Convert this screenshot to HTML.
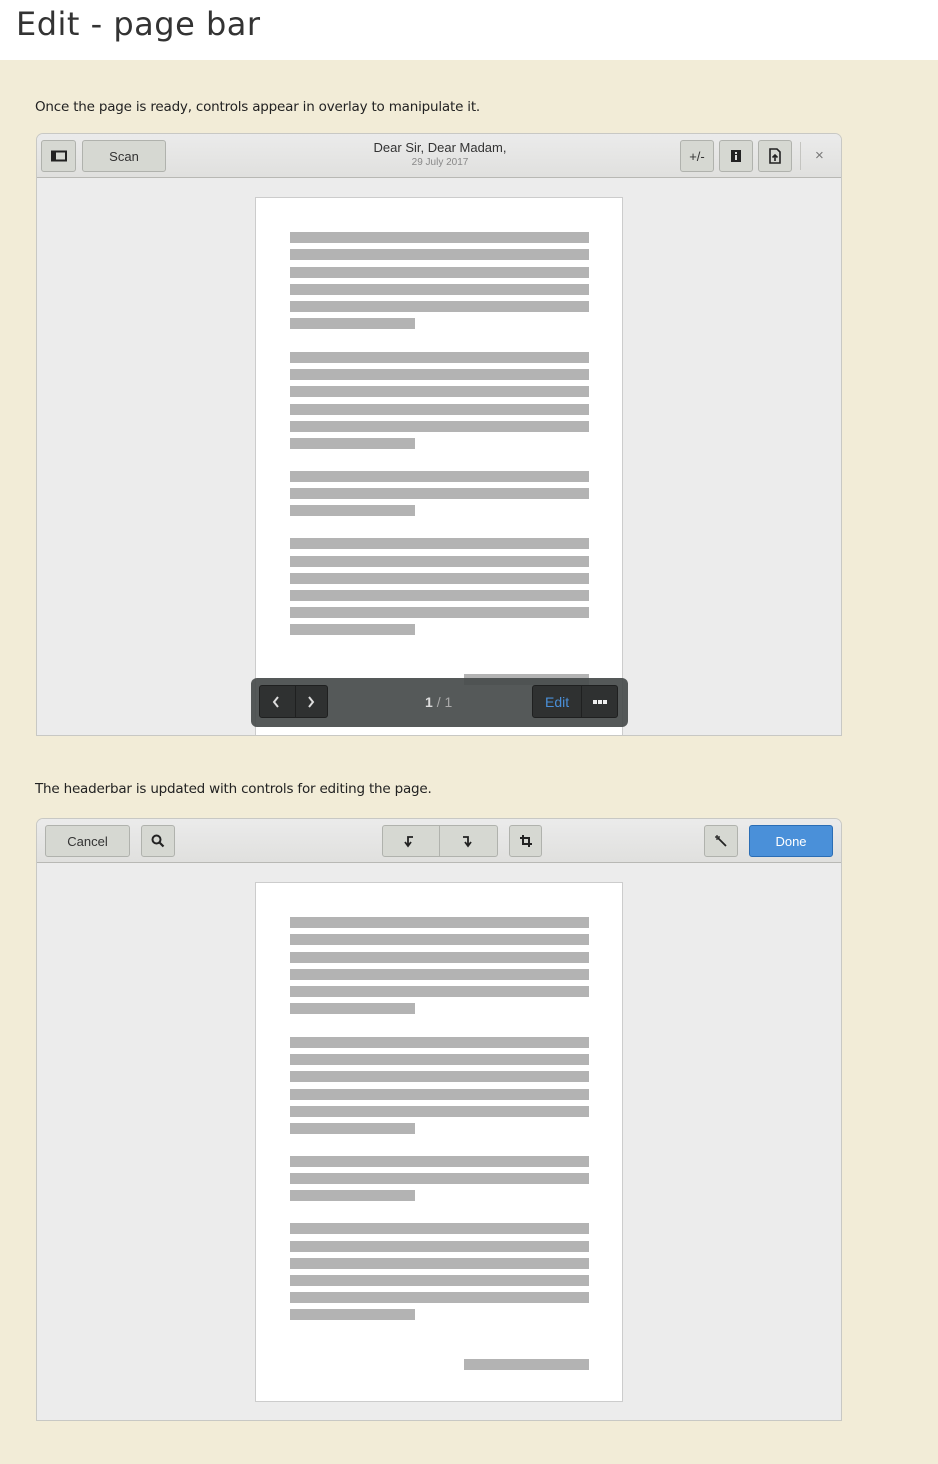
<!DOCTYPE html>
<html><head><meta charset="utf-8"><style>
*{box-sizing:border-box;margin:0;padding:0}
body{width:938px;height:1464px;background:#f2ecd7;font-family:"Liberation Sans","DejaVu Sans",sans-serif;position:relative;overflow:hidden}
.top{position:absolute;left:0;top:0;width:938px;height:60px;background:#fff}
.top h1{position:absolute;left:16px;top:5px;font:400 32px "DejaVu Sans",sans-serif;color:#333;letter-spacing:0.5px}
.p{position:absolute;left:35px;font:13.5px "DejaVu Sans",sans-serif;color:#222;letter-spacing:-0.2px}
.win{position:absolute;left:36px;width:806px;background:#ececec;border:1px solid #c8c8c4;border-radius:7px 7px 0 0;overflow:hidden}
.hb{position:absolute;left:0;top:0;width:100%;height:44px;background:linear-gradient(#ebebeb,#e0e0de);border-bottom:1px solid #b8b8b4}
.b{position:absolute;top:6px;height:32px;background:#d6d8d2;border:1px solid #b0b2ad;border-radius:3px;font-size:13px;color:#333;display:flex;align-items:center;justify-content:center}
.page{position:absolute;left:218px;width:368px;background:#fff;border:1px solid #ccc}
.l{position:absolute;height:11px;background:#b3b3b3}
</style></head><body>
<div class="top"><h1>Edit - page bar</h1></div>
<div class="p" style="top:99px">Once the page is ready, controls appear in overlay to manipulate it.</div>
<div class="win" style="top:133px;height:603px">
 <div class="hb">
  <div class="b" style="left:4px;width:35px"><svg width="16" height="12"><rect x="1" y="1.5" width="14" height="9" fill="none" stroke="#222" stroke-width="2"/><rect x="1" y="1.5" width="4" height="9" fill="#222"/></svg></div>
  <div class="b" style="left:45px;width:84px">Scan</div>
  <div style="position:absolute;left:0;width:806px;top:6px;text-align:center;font-size:13px;color:#333">Dear Sir, Dear Madam,</div>
  <div style="position:absolute;left:0;width:806px;top:23px;text-align:center;font-size:10px;color:#888">29 July 2017</div>
  <div class="b" style="left:643px;width:34px">+/-</div>
  <div class="b" style="left:682px;width:34px"><svg width="12" height="14"><rect x="1" y="1" width="10" height="12" fill="#222"/><rect x="5" y="3" width="2" height="2" fill="#ddd"/><rect x="5" y="6" width="2" height="5" fill="#ddd"/></svg></div>
  <div class="b" style="left:721px;width:34px"><svg width="12" height="16"><path d="M1 1h7l3 3v11H1z" fill="none" stroke="#222" stroke-width="1.6"/><path d="M6 13V7M3.5 9.5L6 7l2.5 2.5" fill="none" stroke="#222" stroke-width="1.6"/></svg></div>
  <div style="position:absolute;left:763px;top:8px;width:1px;height:28px;background:#c4c4c0"></div>
  <div style="position:absolute;left:778px;top:13px;font-size:15px;color:#777">×</div>
 </div>
 <div class="page" style="top:63px;height:560px" id="p1"></div>
 <div style="position:absolute;left:427px;top:540px;width:125px;height:11px;background:#b3b3b3"></div>
 <div style="position:absolute;left:214px;top:544px;width:377px;height:49px;background:rgba(70,75,75,0.92);border-radius:6px"></div>
 <div style="position:absolute;left:222px;top:551px;width:69px;height:33px;background:#2f3131;border:1px solid #1f2020;border-radius:3px"></div>
 <div style="position:absolute;left:258px;top:552px;width:1px;height:31px;background:#1f2020"></div>
 <svg style="position:absolute;left:234px;top:561px" width="10" height="14"><path d="M7 2L3 7l4 5" fill="none" stroke="#ddd" stroke-width="2"/></svg>
 <svg style="position:absolute;left:269px;top:561px" width="10" height="14"><path d="M3 2l4 5-4 5" fill="none" stroke="#ddd" stroke-width="2"/></svg>
 <div style="position:absolute;left:388px;top:560px;font-size:14px;color:#ddd"><b>1</b> <span style="color:#aaa">/ 1</span></div>
 <div style="position:absolute;left:495px;top:551px;width:86px;height:33px;background:#2f3131;border:1px solid #1f2020;border-radius:3px"></div>
 <div style="position:absolute;left:544px;top:552px;width:1px;height:31px;background:#1f2020"></div>
 <div style="position:absolute;left:508px;top:560px;font-size:14px;color:#4a8fd8">Edit</div>
 <div style="position:absolute;left:556px;top:566px;width:4px;height:4px;background:#eee;box-shadow:5px 0 #eee,10px 0 #eee"></div>
</div>
<div class="p" style="top:781px">The headerbar is updated with controls for editing the page.</div>
<div class="win" style="top:818px;height:603px">
 <div class="hb">
  <div class="b" style="left:8px;width:85px">Cancel</div>
  <div class="b" style="left:104px;width:34px"><svg width="14" height="14"><circle cx="5.5" cy="5.5" r="4" fill="none" stroke="#222" stroke-width="2"/><path d="M8.5 8.5l4 4" stroke="#222" stroke-width="2.2"/></svg></div>
  <div class="b" style="left:345px;width:116px"></div>
  <div style="position:absolute;left:402px;top:7px;width:1px;height:30px;background:#b0b2ad"></div>
  <svg style="position:absolute;left:366px;top:15px" width="12" height="14"><path d="M10 3H5v8M2 8l3 4 3-4" fill="none" stroke="#222" stroke-width="1.8"/></svg>
  <svg style="position:absolute;left:424px;top:15px" width="12" height="14"><path d="M2 3h5v8M4 8l3 4 3-4" fill="none" stroke="#222" stroke-width="1.8"/></svg>
  <div class="b" style="left:472px;width:33px"><svg width="14" height="14"><path d="M4 1v9h9M1 4h9v9" fill="none" stroke="#222" stroke-width="2"/></svg></div>
  <div class="b" style="left:667px;width:34px"><svg width="14" height="14"><path d="M4 4l8 8" stroke="#222" stroke-width="1.8"/><path d="M3 1v5M1 3h5" stroke="#222" stroke-width="1.2"/></svg></div>
  <div class="b" style="left:712px;width:84px;background:#4a90d9;border-color:#2a6db5;color:#fff">Done</div>
 </div>
 <div class="page" style="top:63px;height:520px" id="p2"></div>
</div>
<div id="lines"></div>
<script>
var L=[[232,0],[249,0],[267,0],[284,0],[301,0],[318,1],[352,0],[369,0],[386,0],[404,0],[421,0],[438,1],[471,0],[488,0],[505,1],[538,0],[556,0],[573,0],[590,0],[607,0],[624,1]];
var h='';[0,685].forEach(function(o){L.forEach(function(a){var t=a[0]+o;var x=290,w=299;if(a[1]==1)w=125;
h+='<div class="l" style="left:'+x+'px;top:'+t+'px;width:'+w+'px"></div>';});});
h+='<div class="l" style="left:464px;top:1359px;width:125px"></div>';
document.getElementById('lines').innerHTML=h;
</script>
</body></html>
